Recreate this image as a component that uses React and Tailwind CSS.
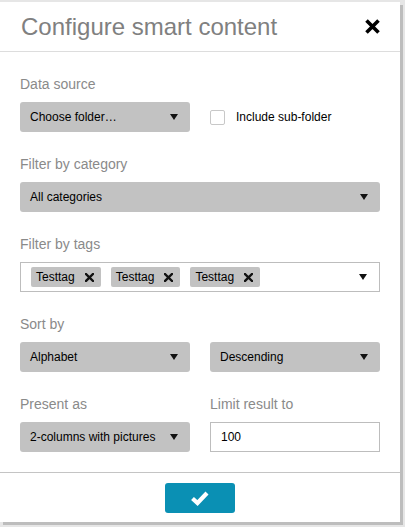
import React from "react";

const font = { fontFamily: '"Liberation Sans", Arial, sans-serif' };

const Caret = () => (
  <svg width="8" height="6" viewBox="0 0 8 6" className="shrink-0">
    <path d="M0 0 H8 L4 6 Z" fill="#111" />
  </svg>
);

const Select = ({ value, className = "" }) => (
  <div
    className={`h-[30px] flex items-center justify-between pl-[10px] pr-[12px] bg-[#c2c2c2] rounded-[3px] text-[12px] text-black ${className}`}
  >
    <span>{value}</span>
    <Caret />
  </div>
);

const Label = ({ children }) => (
  <p className="text-[14px] leading-4 text-[#8a8a8a] mb-[10px]">{children}</p>
);

const Tag = ({ name }) => (
  <span className="h-5 flex items-center gap-[10px] pl-[5px] pr-[7px] bg-[#c2c2c2] rounded-[2px] text-[12px] text-black">
    {name}
    <svg width="9" height="9" viewBox="0 0 9 9">
      <path d="M1 1 L8 8 M8 1 L1 8" stroke="#111" strokeWidth="2.4" strokeLinecap="square" />
    </svg>
  </span>
);

const App = () => {
  const tags = ["Testtag", "Testtag", "Testtag"];

  return (
    <div className="w-[405px] h-[527px] bg-[#e6e6e6] pt-[2px]" style={font}>
      <div className="w-[400px] h-[520px] bg-white flex flex-col shadow-[3px_3px_0_#bdbdbd]">
        <div className="h-[50px] flex items-center justify-between pl-[21px] pr-[20px] border-b border-[#dddddd]">
          <h1 className="text-[24px] text-[#808080]">Configure smart content</h1>
          <svg width="15" height="15" viewBox="0 0 15 15">
            <path d="M1.5 1.5 L13.5 13.5 M13.5 1.5 L1.5 13.5" stroke="#000" strokeWidth="3.6" />
          </svg>
        </div>

        <div className="flex-1 px-5 pt-6">
          <Label>Data source</Label>
          <div className="flex items-center gap-5">
            <Select value="Choose folder…" className="w-[170px]" />
            <label className="flex items-center gap-[11px] text-[12px] text-black">
              <span className="w-[15px] h-[15px] border border-[#c8c8c8] bg-white rounded-[2px]" />
              Include sub-folder
            </label>
          </div>

          <div className="mt-6">
            <Label>Filter by category</Label>
            <Select value="All categories" />
          </div>

          <div className="mt-6">
            <Label>Filter by tags</Label>
            <div className="h-[30px] flex items-center justify-between pl-[10px] pr-[12px] border border-[#bdbdbd] bg-white">
              <div className="flex gap-[10px]">
                {tags.map((t, i) => (
                  <Tag key={i} name={t} />
                ))}
              </div>
              <Caret />
            </div>
          </div>

          <div className="mt-6">
            <Label>Sort by</Label>
            <div className="flex gap-5">
              <Select value="Alphabet" className="w-[170px]" />
              <Select value="Descending" className="w-[170px]" />
            </div>
          </div>

          <div className="mt-6 flex gap-5">
            <div className="w-[170px]">
              <Label>Present as</Label>
              <Select value="2-columns with pictures" />
            </div>
            <div className="w-[170px]">
              <Label>Limit result to</Label>
              <div className="h-[30px] flex items-center px-[10px] border border-[#bdbdbd] bg-white text-[12px] text-black">
                100
              </div>
            </div>
          </div>
        </div>

        <div className="h-[50px] border-t border-[#c4c4c4] flex items-center justify-center">
          <button className="w-[70px] h-[30px] rounded-[3px] bg-[#0a90b4] flex items-center justify-center">
            <svg width="20" height="16" viewBox="0 0 20 16">
              <path d="M2.5 8.5 L7.5 13 L17 3" fill="none" stroke="#fff" strokeWidth="4.2" strokeLinejoin="miter" />
            </svg>
          </button>
        </div>
      </div>
    </div>
  );
};

export default App;
